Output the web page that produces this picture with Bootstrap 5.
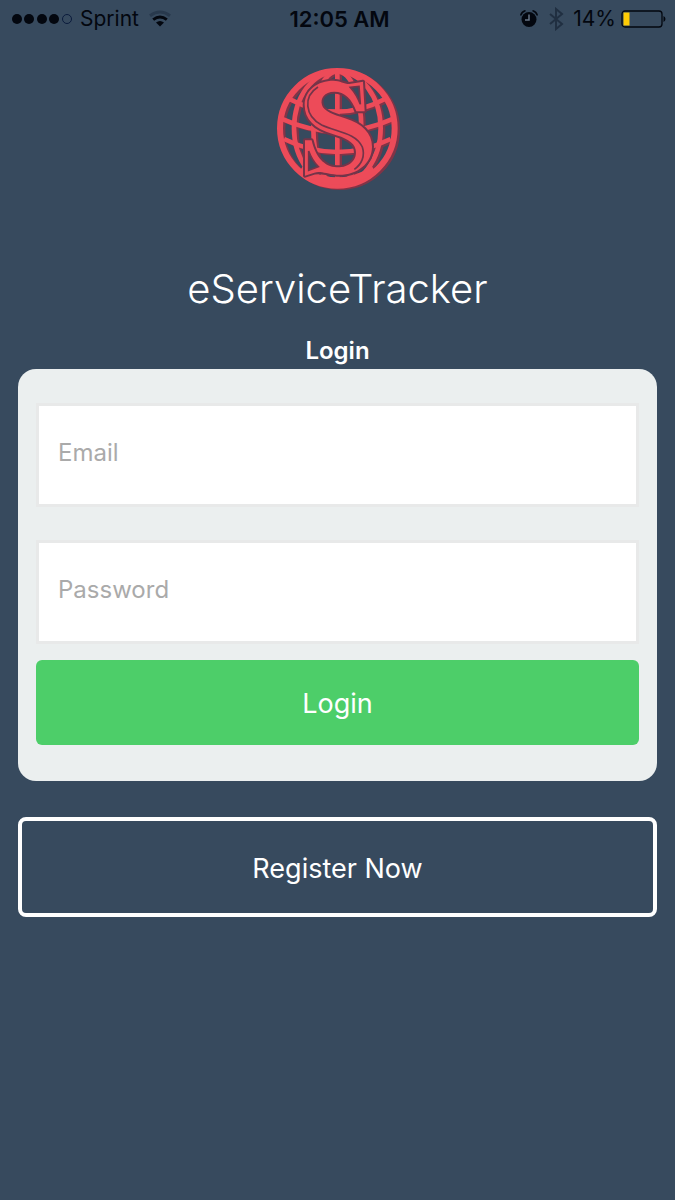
<!DOCTYPE html>
<html lang="en">
<head>
<meta charset="utf-8">
<meta name="viewport" content="width=device-width, initial-scale=1">
<title>eServiceTracker</title>
<link href="https://cdn.jsdelivr.net/npm/bootstrap@5.3.0/dist/css/bootstrap.min.css" rel="stylesheet">
<style>
body { background: #374a5e; color: #fff; font-family: Inter, "Liberation Sans", sans-serif; }
.status-bar { height: 37px; padding: 0 8px 0 12px; color: #03070f; font-size: 21px; line-height: 36px; }
.status-side { flex: 1 1 0; }
.clock { font-size: 22px; font-weight: 600; }
.logo { width: 148px; height: 148px; margin-top: 18px; }
.app-title { font-size: 40px; font-weight: 300; line-height: 52px; margin: 60px 0 0; }
.form-title { font-size: 24px; font-weight: 600; line-height: 32px; margin: 20px 0 2px; }
.screen { padding: 0 18px; }
.login-panel { background: #ebefef; border-radius: 18px; padding: 34px 18px 36px; }
.login-panel .form-control { height: 104px; border: 3px solid #e8e9e9; border-radius: 0; padding: 0 19px; font-size: 24px; }
.login-panel label { display: flex; align-items: center; padding: 0 22px 5px; color: #aaa; font-size: 24px; border: 0; }
.login-panel .form-floating + .form-floating { margin-top: 33px; }
.btn-login { height: 85px; margin-top: 16px; padding: 8px 12px 4px; border-radius: 6px; background: #4dce69; color: #fff; font-size: 27px; }
.btn-register { height: 100px; margin-top: 36px; padding: 8px 12px 4px; border: 4px solid #fff; border-radius: 8px; color: #fff; font-size: 27px; }
</style>
</head>
<body>
<header class="status-bar d-flex align-items-center">
  <div class="status-side d-flex align-items-center gap-2">
    <svg width="60" height="12" viewBox="1 0 60 12" aria-hidden="true"><g fill="#03070f"><circle cx="6" cy="6" r="5"/><circle cx="18" cy="6" r="5"/><circle cx="31" cy="6" r="5"/><circle cx="43" cy="6" r="5"/></g><circle cx="56" cy="6" r="4.5" fill="none" stroke="#0a1b3c"/></svg>
    <span>Sprint</span>
    <svg width="26" height="18" viewBox="-1 0 26 18" aria-hidden="true"><g fill="none" stroke-width="3"><path d="M2 5.8Q12-1.8 22 5.8" stroke="#28394d"/><path d="M5.2 9.6Q12 4.4 18.8 9.6" stroke="#03070f"/></g><path d="M8 12.5Q12 9.5 16 12.5L12 16.5Z" fill="#03070f"/></svg>
  </div>
  <div class="clock">12:05 AM</div>
  <div class="status-side d-flex align-items-center justify-content-end">
    <svg class="me-2" width="20" height="20" viewBox="0 0 20 20" aria-hidden="true"><g fill="#03070f"><circle cx="10" cy="10.5" r="7.5"/><path d="M1 6Q2 2 6 1L7 2Q3.5 3.5 2 7ZM19 6Q18 2 14 1L13 2Q16.5 3.5 18 7Z"/></g><path d="M10 5.5V11H6" fill="none" stroke="#687687" stroke-width="1.5"/></svg>
    <svg class="me-2" width="18" height="24" viewBox="0 0 18 24" aria-hidden="true"><path d="M3 7L15 17L9 22V2L15 7L3 17" fill="none" stroke="#202f41" stroke-width="2"/></svg>
    <span>14%</span>
    <svg class="ms-1" width="47" height="20" viewBox="0 0 47 20" aria-hidden="true"><rect x="2" y="2" width="40" height="16" rx="3" fill="none" stroke="#03070f" stroke-width="1.3"/><path d="M3.500 3.500H9.500V16.500H3.500Z" fill="#ffcc05"/><path d="M43.5 7Q45.5 8 45.5 10T43.5 13Z" fill="#03070f"/></svg>
  </div>
</header>
<main class="screen text-center">
  <svg class="logo" viewBox="0 0 444 444" role="img" aria-label="Globe with the letter S">
    <defs>
      <g id="globe" fill="none" stroke-width="14">
        <circle cx="220" cy="220" r="172" stroke-width="18"/>
        <path d="M220 48V392"/>
        <ellipse cx="220" cy="220" rx="72" ry="171"/>
        <ellipse cx="220" cy="220" rx="130" ry="171"/>
        <path d="M76 132Q220 208 363 132M50 190Q220 268 390 190M60 252Q220 330 380 252"/>
        <path d="M110 344Q220 412 330 344" stroke-width="22"/>
      </g>
      <path id="letter" d="M297 80L302 169L277 169C264 132 242 110 211 110C181 110 168 130 174 150C179 168 206 178 243 190C295 206 324 235 324 275C324 328 274 363 218 359C186 357 170 347 151 353L123 362V256H143C154 305 181 336 218 337C256 338 281 314 275 284C270 260 243 248 206 237C151 221 122 192 122 150C122 105 162 77 208 77C229 77 239 87 256 87Z"/>
    </defs>
    <use href="#globe" x="7" y="4" stroke="#813447"/>
    <use href="#globe" stroke="#ed4b59"/>
    <use href="#letter" fill="#ed4b59" stroke="#743449" stroke-width="12" stroke-linejoin="round"/>
    <use href="#letter" fill="#ed4b59"/>
    <g fill="none" stroke="#743449" stroke-width="5">
      <path d="M162 96C117 124 122 183 173 210C217 231 276 233 295 276C304 303 293 328 271 343"/>
      <path d="M259 97L285 94L289 148Q278 118 259 97ZM134 288Q144 316 163 335L134 346Z" fill="#374a5e"/>
    </g>
  </svg>
  <h1 class="app-title">eServiceTracker</h1>
  <h2 class="form-title">Login</h2>
  <form class="login-panel">
    <div class="form-floating"><input class="form-control" id="email" type="email" placeholder=" "><label for="email">Email</label></div>
    <div class="form-floating"><input class="form-control" id="password" type="password" placeholder=" "><label for="password">Password</label></div>
    <button class="btn btn-login w-100" type="submit">Login</button>
  </form>
  <button class="btn btn-register w-100" type="button">Register Now</button>
</main>
<script src="https://cdn.jsdelivr.net/npm/bootstrap@5.3.0/dist/js/bootstrap.bundle.min.js"></script>
</body>
</html>
